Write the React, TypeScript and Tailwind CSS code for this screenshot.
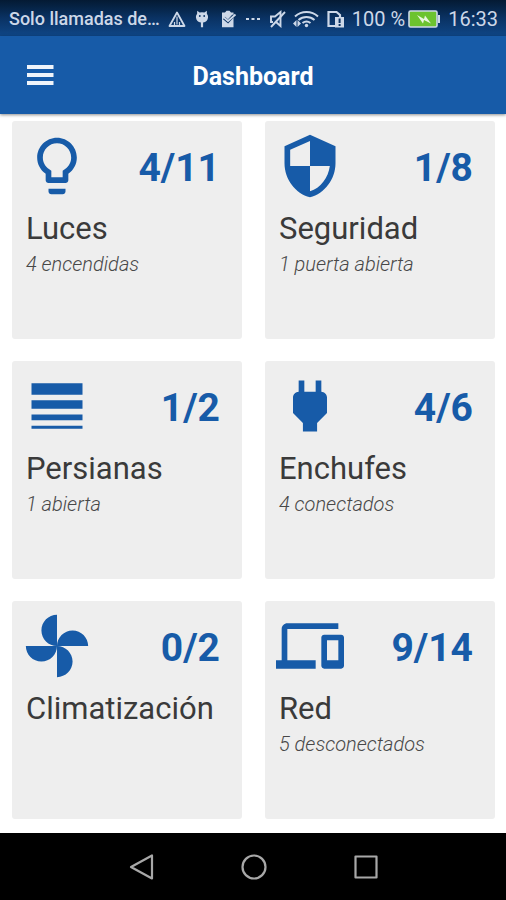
import type { ReactNode } from "react";

type Tile = {
  id: string;
  title: string;
  count: string;
  detail?: string;
  icon: string;
};

// Iconos Material (24x24)
const TILES: Tile[] = [
  {
    id: "luces",
    title: "Luces",
    count: "4/11",
    detail: "4 encendidas",
    icon: "M9 21c0 .55.45 1 1 1h4c.55 0 1-.45 1-1v-1H9v1zm3-19C8.14 2 5 5.14 5 9c0 2.38 1.19 4.47 3 5.74V17c0 .55.45 1 1 1h6c.55 0 1-.45 1-1v-2.26c1.81-1.27 3-3.36 3-5.74 0-3.86-3.14-7-7-7zm2.85 11.1l-.85.6V16h-4v-2.3l-.85-.6C7.8 12.16 7 10.63 7 9c0-2.76 2.24-5 5-5s5 2.24 5 5c0 1.63-.8 3.16-2.15 4.1z",
  },
  {
    id: "seguridad",
    title: "Seguridad",
    count: "1/8",
    detail: "1 puerta abierta",
    icon: "M12 1L3 5v6c0 5.55 3.84 10.74 9 12 5.16-1.26 9-6.45 9-12V5l-9-4zm0 10.99h7c-.53 4.12-3.28 7.79-7 8.94V12H5V6.3l7-3.11v8.8z",
  },
  {
    id: "persianas",
    title: "Persianas",
    count: "1/2",
    detail: "1 abierta",
    icon: "M3 17h18v-2H3v2zm0 3h18v-1H3v1zm0-7h18v-3H3v3zm0-9v4h18V4H3z",
  },
  {
    id: "enchufes",
    title: "Enchufes",
    count: "4/6",
    detail: "4 conectados",
    icon: "M16.01 7L16 3h-2v4h-4V3H8v4h-.01C7 6.99 6 7.99 6 8.99v5.49L9.5 18v3h5v-3l3.5-3.51v-5.5c0-1-1-2-1.99-1.99z",
  },
  {
    id: "climatizacion",
    title: "Climatización",
    count: "0/2",
    icon: "M12 12c0-3 2.5-5.5 5.5-5.5S23 9 23 12H12zm0 0c0 3-2.5 5.5-5.5 5.5S1 15 1 12h11zm0 0c-3 0-5.5-2.5-5.5-5.5S9 1 12 1v11zm0 0c3 0 5.5 2.5 5.5 5.5S15 23 12 23V12z",
  },
  {
    id: "red",
    title: "Red",
    count: "9/14",
    detail: "5 desconectados",
    icon: "M4 6h18V4H4c-1.1 0-2 .9-2 2v11H0v3h14v-3H4V6zm19 2h-6c-.55 0-1 .45-1 1v10c0 .55.45 1 1 1h6c.55 0 1-.45 1-1V9c0-.55-.45-1-1-1zm-1 9h-4v-7h4v7z",
  },
];

function StatusBar() {
  return (
    <div className="flex h-9 items-center justify-between bg-linear-to-b from-[#041a33] via-[#0a3263] to-[#0f4686] pt-0.5 pr-2 pl-[9px] text-[#cdd8e8]">
      <div className="flex items-center gap-2">
        <span className="text-[18px] leading-6 font-medium whitespace-nowrap">Solo llamadas de…</span>
        <svg width="18" height="18" viewBox="0 0 18 18" fill="none" stroke="currentColor" strokeWidth="1.8" strokeLinejoin="round">
          <path d="M9 2.5 16.5 16h-15z" />
          <path d="M9 6.5v8M6.5 12v3M11.5 12v3" strokeWidth="1.2" />
        </svg>
        <svg width="16" height="18" viewBox="0 0 16 18" fill="currentColor">
          <path d="M3.2.8 5.6 2.6a7 7 0 0 1 4.8 0L12.8.8l.1 3.2c1 1.1 1.3 2.2 1.1 3.7-.3 2.7-2 4.4-4.9 4.8v4.7H6.9v-4.7C4 12.1 2.3 10.4 2 7.7c-.2-1.5.1-2.6 1.1-3.7z" />
          <circle cx="5.8" cy="6" r=".9" fill="#0a3263" />
          <circle cx="10.2" cy="6" r=".9" fill="#0a3263" />
        </svg>
        <svg width="20" height="18" viewBox="0 0 20 18">
          <path d="M4 2.5h3L8.5.8h3L13 2.5h2.5v14.7H4z" fill="currentColor" />
          <path d="m6 8 4 3.5 5.5-6" fill="none" stroke="#0a3263" strokeWidth="3" />
          <path d="m6 7.5 4 3.5 7.5-6.5" fill="none" stroke="currentColor" strokeWidth="1.8" />
        </svg>
        <svg width="14" height="4" viewBox="0 0 14 4" fill="currentColor">
          <path d="M0 1h3v2H0zM5.5 1h3v2h-3zM11 1h3v2h-3z" />
        </svg>
      </div>
      <div className="flex items-center gap-[7px]">
        <svg width="17" height="18" viewBox="0 0 17 18" fill="none" stroke="currentColor" strokeWidth="1.9">
          <path d="M4 12H2V6.5h4L11.5 2v14L7 12" />
          <path d="M16 2 2 17" />
        </svg>
        <svg width="26" height="18" viewBox="0 0 26 18" fill="none" stroke="currentColor" strokeWidth="2">
          <path d="M2 6.5a17 17 0 0 1 23 0M5.5 10a12 12 0 0 1 16 0M9.5 13a6.500 6.500 0 0 1 8 0" />
          <circle cx="13.5" cy="15.5" r="1.7" fill="currentColor" stroke="none" />
          <path d="m0 13.5 3.5-3.5v7zM8 13.5l-3.500-3.500v7z" fill="currentColor" stroke="none" />
        </svg>
        <svg width="19" height="18" viewBox="0 0 19 18">
          <path d="M10 16H2.5V2h8L14 5v2" fill="none" stroke="currentColor" strokeWidth="2.2" />
          <path d="M9 7h9v10.500H9z" fill="currentColor" />
          <path d="M12.6 8.5h2V13h-2zM12.6 14h2v2h-2z" fill="#0a3263" />
        </svg>
        <div className="flex items-center gap-[3px]">
          <span className="text-[20px] leading-6 whitespace-nowrap">100 %</span>
          <svg width="33" height="18" viewBox="0 0 33 18">
            <rect x="1" y="1" width="28" height="16" rx="1.5" fill="#6cc32f" stroke="currentColor" strokeWidth="1.6" />
            <path d="M30 5h2v8h-2z" fill="currentColor" />
            <path d="m9 5 7 4 1-3.5 6 8-7-3.5-1 3.5z" fill="#e9f6df" />
          </svg>
        </div>
        <span className="text-[20px] leading-6">16:33</span>
      </div>
    </div>
  );
}

function AppHeader() {
  return (
    <header className="relative grid h-[78px] grid-cols-3 items-center bg-[#175ba8] shadow-[0_1px_3px_rgba(0,0,0,0.45)]">
      <button type="button" aria-label="Menú" className="ml-[27px] w-[27px] text-[#f0f4fa]">
        <svg width="27" height="20" viewBox="0 0 27 20" fill="currentColor">
          <path d="M0 0h26.5v4H0zM0 8h26.5v4H0zM0 16h26.5v4H0z" />
        </svg>
      </button>
      <h1 className="pt-1 text-center text-[25px] leading-8 font-bold text-white">Dashboard</h1>
    </header>
  );
}

function TileCard({ tile }: { tile: Tile }) {
  return (
    <a href={`#${tile.id}`} className="block h-[218px] rounded-[3px] bg-[#eeeeee] pt-[11px]">
      <div className="flex items-center justify-between pr-[22px] pl-[11px]">
        <svg width="68" height="68" viewBox="0 0 24 24" fill="#175ba8">
          <path d={tile.icon} />
        </svg>
        <span className="pt-1 text-[39px] leading-[48px] font-bold text-[#175ba8]">{tile.count}</span>
      </div>
      <h2 className="mt-[11px] pl-[14px] text-[31px] leading-9 text-[#3a3a3a]">{tile.title}</h2>
      {tile.detail && <p className="mt-[5px] pl-[14px] text-[20px] leading-6 font-light text-[#484848] italic">{tile.detail}</p>}
    </a>
  );
}

function NavButton({ label, children }: { label: string; children: ReactNode }) {
  return (
    <button type="button" aria-label={label}>
      <svg width="28" height="28" viewBox="0 0 28 28" fill="none" stroke="#a8a8a8" strokeWidth="2.2" strokeLinejoin="round">
        {children}
      </svg>
    </button>
  );
}

export default function App() {
  return (
    <div className="flex min-h-screen flex-col bg-white font-['Roboto',sans-serif]">
      <StatusBar />
      <AppHeader />
      <main className="grid flex-1 grid-cols-2 content-start gap-x-[23px] gap-y-[22px] pt-[7px] pr-[11px] pb-[14px] pl-3">
        {TILES.map((tile) => (
          <TileCard key={tile.id} tile={tile} />
        ))}
      </main>
      <nav className="flex h-[67px] items-center justify-center gap-[84px] bg-black pl-[2px]">
        <NavButton label="Atrás">
          <path d="M24 2.5v23L3 14z" />
        </NavButton>
        <NavButton label="Inicio">
          <circle cx="14" cy="14" r="11.5" />
        </NavButton>
        <NavButton label="Recientes">
          <path d="M3.5 3.5h21v21h-21z" />
        </NavButton>
      </nav>
    </div>
  );
}
